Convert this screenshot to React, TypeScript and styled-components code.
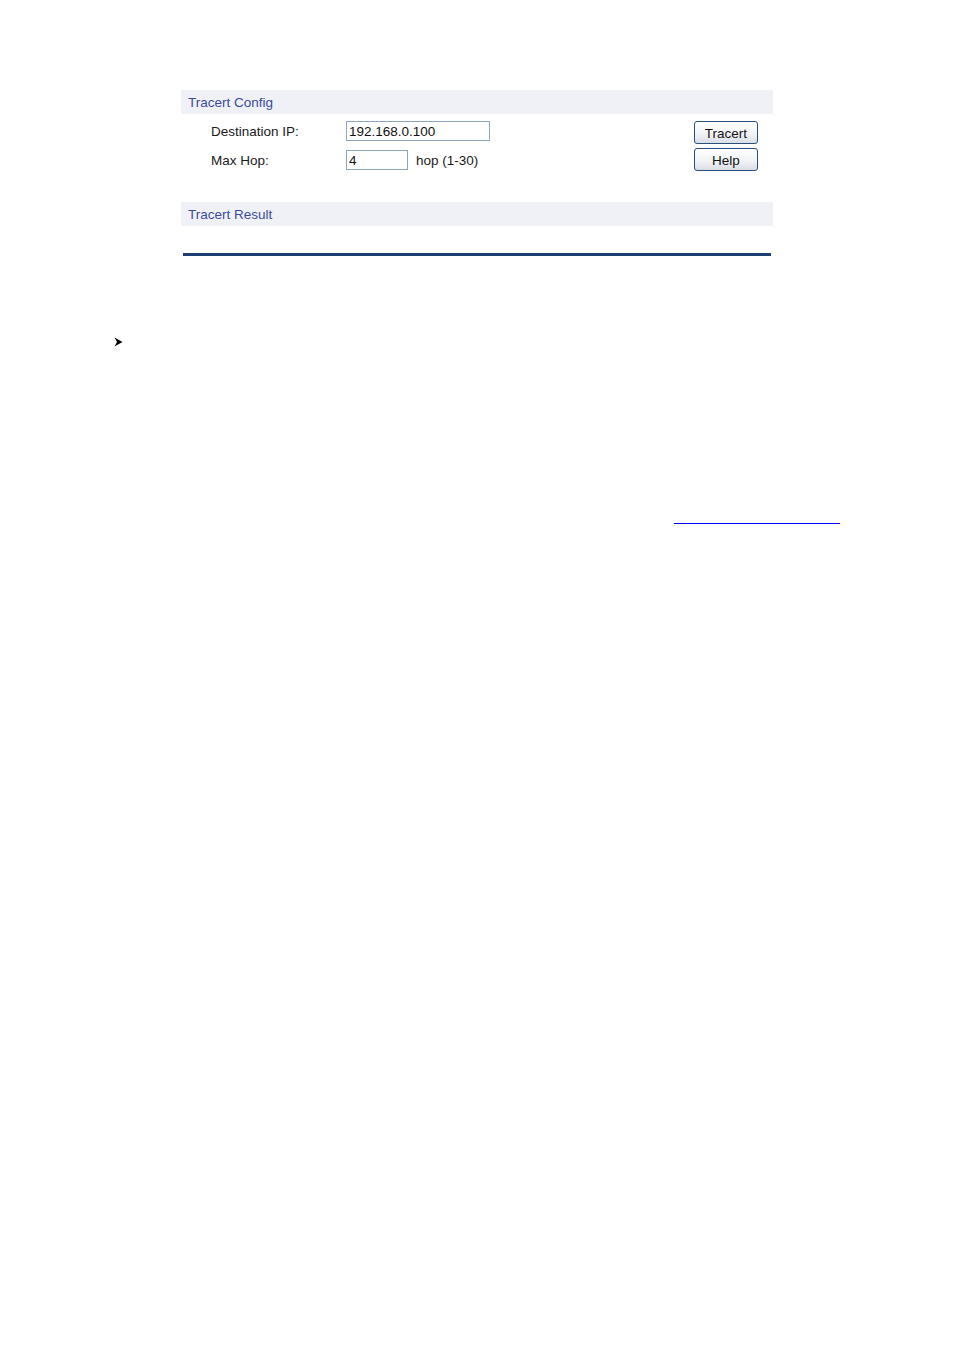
import styled, { createGlobalStyle } from "styled-components";

const GlobalStyle = createGlobalStyle`
  body {
    margin: 0;
    background: #ffffff;
    font-family: "Liberation Sans", Arial, sans-serif;
  }
`;

const Page = styled.div`
  width: 954px;
  height: 1350px;
  padding-top: 90px;
  box-sizing: border-box;
`;

const Panel = styled.div`
  width: 592px;
  margin-left: 181px;
`;

const SectionHeader = styled.div`
  height: 24px;
  line-height: 24px;
  padding-top: 1px;
  box-sizing: border-box;
  background: #f0f1f6;
  color: #3a4b9e;
  font-size: 13.5px;
  padding-left: 7px;
`;

const ConfigBody = styled.div`
  height: 88px;
  display: flex;
  justify-content: space-between;
  padding: 7px 15px 0 30px;
  box-sizing: border-box;
`;

const Fields = styled.div`
  display: flex;
  flex-direction: column;
  gap: 9px;
`;

const FieldRow = styled.div`
  display: flex;
  align-items: center;
  height: 20px;
  font-size: 13.5px;
  color: #1a1a1a;
`;

const Label = styled.span`
  width: 135px;
`;

const TextInput = styled.input<{ $width: number }>`
  width: ${(p) => p.$width}px;
  height: 20px;
  box-sizing: border-box;
  border: 1px solid #8fa6c0;
  padding: 0 2px;
  font-family: "Liberation Sans", Arial, sans-serif;
  font-size: 13.5px;
  color: #111;
  outline: none;
`;

const Unit = styled.span`
  margin-left: 8px;
`;

const Buttons = styled.div`
  display: flex;
  flex-direction: column;
  gap: 4px;
`;

const Button = styled.button`
  width: 64px;
  height: 23px;
  box-sizing: border-box;
  border: 1px solid #2a4f7c;
  border-radius: 3px;
  background: linear-gradient(#ffffff 0%, #f3f4f6 55%, #d9dde6 100%);
  font-family: "Liberation Sans", Arial, sans-serif;
  font-size: 13.5px;
  color: #111;
  padding: 2px 0 0;
  cursor: pointer;
`;

const ResultBody = styled.div`
  height: 27px;
`;

const Divider = styled.div`
  margin: 0 2px;
  height: 3px;
  background: #1d3e72;
`;

const Bullet = styled.div`
  margin: 81px 0 0 114px;
  width: 9px;
  height: 10px;
  line-height: 0;
`;

const LinkLine = styled.div`
  margin: 176px 0 0 674px;
  width: 166px;
  height: 1px;
  background: #0000ff;
`;

export default function App() {
  return (
    <>
      <GlobalStyle />
      <Page>
        <Panel>
          <SectionHeader>Tracert Config</SectionHeader>
          <ConfigBody>
            <Fields>
              <FieldRow>
                <Label>Destination IP:</Label>
                <TextInput $width={144} defaultValue="192.168.0.100" />
              </FieldRow>
              <FieldRow>
                <Label>Max Hop:</Label>
                <TextInput $width={62} defaultValue="4" />
                <Unit>hop (1-30)</Unit>
              </FieldRow>
            </Fields>
            <Buttons>
              <Button>Tracert</Button>
              <Button>Help</Button>
            </Buttons>
          </ConfigBody>
          <SectionHeader>Tracert Result</SectionHeader>
          <ResultBody />
          <Divider />
        </Panel>
        <Bullet>
          <svg width="9" height="10" viewBox="0 0 9 10">
            <path d="M0.5 0.5 L8.5 5 L0.5 9.5 L3 5 Z" fill="#000" />
          </svg>
        </Bullet>
        <LinkLine />
      </Page>
    </>
  );
}
